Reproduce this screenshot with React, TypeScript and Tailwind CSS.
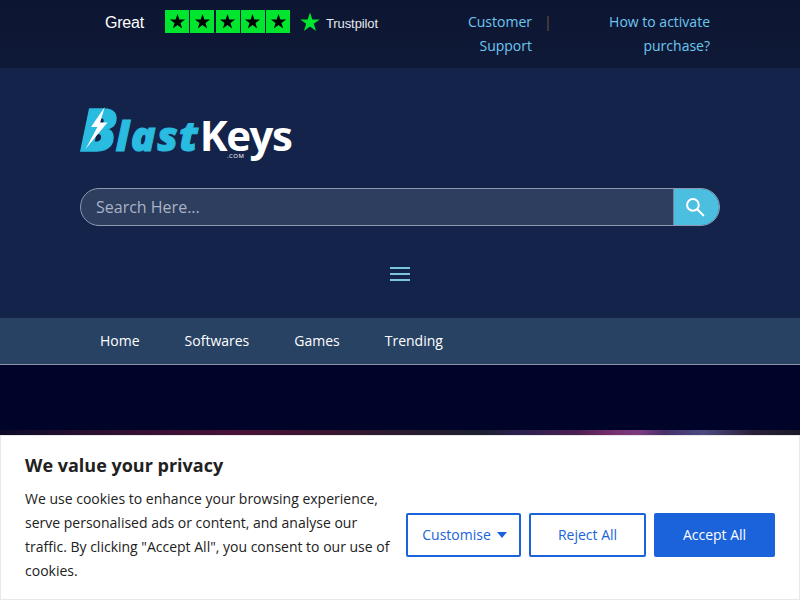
import React from 'react';

const Star = ({ className }: { className: string }) => (
  <svg viewBox="0 0 24 24" className={className} fill="currentColor">
    <path d="M12 1.5l2.6 7.7h8.1l-6.5 4.8 2.4 7.8L12 17l-6.6 4.8 2.4-7.8L1.3 9.2h8.1z" />
  </svg>
);

const NAV = ['Home', 'Softwares', 'Games', 'Trending'];

const Rating = () => (
  <div className="flex items-center font-['Liberation_Sans',sans-serif] text-white">
    <span className="w-[60px] ml-[105px] pt-[3px] text-base leading-none tracking-[-0.2px]">Great</span>
    <div className="flex gap-[1.25px]">
      {[0, 1, 2, 3, 4].map((i) => (
        <div key={i} className="w-6 h-[23px] bg-[#00e52e] flex items-center justify-center text-black">
          <Star className="w-[17px] h-[17px]" />
        </div>
      ))}
    </div>
    <Star className="w-[22px] h-[22px] ml-[9px] text-[#00e52e]" />
    <span className="ml-[5px] pt-[3px] text-[13px] leading-none tracking-[-0.1px] text-[#e4e8ee]">Trustpilot</span>
  </div>
);

const Logo = () => (
  <div className="relative w-[212px] h-[56px] flex items-baseline font-['Open_Sans',sans-serif] font-extrabold leading-none">
    <span className="text-[#29bbe0] text-[58px] italic tracking-[-1px] [-webkit-text-stroke:1.5px_#29bbe0]">B</span>
    <span className="text-[#29bbe0] text-[41px] italic tracking-[1.6px] [-webkit-text-stroke:1px_#29bbe0]">last</span>
    <span className="text-white text-[42px] tracking-[-1.4px] font-bold">Keys</span>
    <svg viewBox="0 0 24 46" className="absolute left-[3px] top-[7px] w-[27px] h-[42px] text-white" fill="currentColor">
      <path d="M21 0L6 22h7L0 46 24 17h-8z" />
    </svg>
    <span className="absolute left-[147px] top-[53px] text-white text-[6px] font-normal tracking-[0.5px]">.COM</span>
  </div>
);

export default function App() {
  return (
    <div className="h-[600px] overflow-hidden bg-[#000429] font-['Open_Sans',sans-serif]">
      <div className="h-[68px] bg-gradient-to-b from-[#0c1531] to-[#0f1a38] flex items-start">
        <div className="w-[400px] pt-[10px]">
          <Rating />
        </div>
        <div className="flex text-sm leading-6 text-[#6ec6f0] pt-[10px]">
          <div className="w-[100px] ml-[32px] text-right">Customer Support</div>
          <span className="text-[#6b5a3a] w-[9px] ml-[12px]">|</span>
          <div className="w-[157px] text-right pl-[40px]">How to activate purchase?</div>
        </div>
      </div>

      <div className="h-[250px] bg-[#13234a] px-20 pt-[32px]">
        <Logo />
        <div className="flex h-[38px] mt-[32px] rounded-full border border-[#8c97b0] overflow-hidden bg-[#2d3e5f]">
          <div className="flex-1 pl-[15px] text-base leading-9 text-[#aab3c4]">Search Here...</div>
          <div className="w-[46px] pr-1 bg-[#4cbfe0] border-l border-[#6f80a0] flex items-center justify-center">
            <svg viewBox="0 0 24 24" className="w-[20px] h-[20px] text-white" fill="none" stroke="currentColor" strokeWidth="2.4" strokeLinecap="round">
              <circle cx="9.5" cy="9.5" r="7" />
              <path d="M15 15l7 7" />
            </svg>
          </div>
        </div>
        <div className="flex flex-col items-center gap-1 mt-[41px]">
          <div className="w-5 h-0.5 bg-[#7cc4d8]" />
          <div className="w-5 h-0.5 bg-[#7cc4d8]" />
          <div className="w-5 h-0.5 bg-[#7cc4d8]" />
        </div>
      </div>

      <nav className="h-[47px] bg-[#284264] border-b border-[#8a94a3] flex pl-[100px] gap-[45px] text-sm leading-[46px] text-white">
        {NAV.map((item) => (
          <span key={item}>{item}</span>
        ))}
      </nav>

      <div className="h-[70px] flex flex-col justify-end">
        <div className="h-[5px] bg-[linear-gradient(to_right,#0a0a28_0%,#2a1030_11%,#4a1238_30%,#3a1630_40%,#1c2030_60%,#2a2050_65%,#4a2050_72%,#7a3070_77%,#7a3a80_80%,#48306a_83%,#4a4a80_88%,#2a2038_94%,#1a1a28_100%)]" />
      </div>

      <div className="fixed left-0 right-0 bottom-0 h-[165px] bg-white border border-[#e8e8e8] flex text-[#212121]">
        <div className="w-[370px] ml-6 mr-[11px] pt-[17px]">
          <h2 className="text-lg font-bold leading-6">We value your privacy</h2>
          <p className="text-sm leading-6 mt-[10px]">
            We use cookies to enhance your browsing experience, serve personalised ads or content, and analyse our traffic. By clicking "Accept All", you consent to our use of cookies.
          </p>
        </div>
        <div className="flex gap-2 mt-[77px] text-sm">
          <button className="w-[115px] h-11 pl-[2px] border-2 border-[#1a63db] rounded-[2px] text-[#1a63db] flex items-center justify-center gap-[6px]">
            Customise
            <span className="w-0 h-0 border-x-[5px] border-x-transparent border-t-[6px] border-t-[#1a63db]" />
          </button>
          <button className="w-[117px] h-11 border-2 border-[#1a63db] rounded-[2px] text-[#1a63db]">Reject All</button>
          <button className="w-[121px] h-11 bg-[#1a63db] rounded-[2px] text-white">Accept All</button>
        </div>
      </div>
    </div>
  );
}
